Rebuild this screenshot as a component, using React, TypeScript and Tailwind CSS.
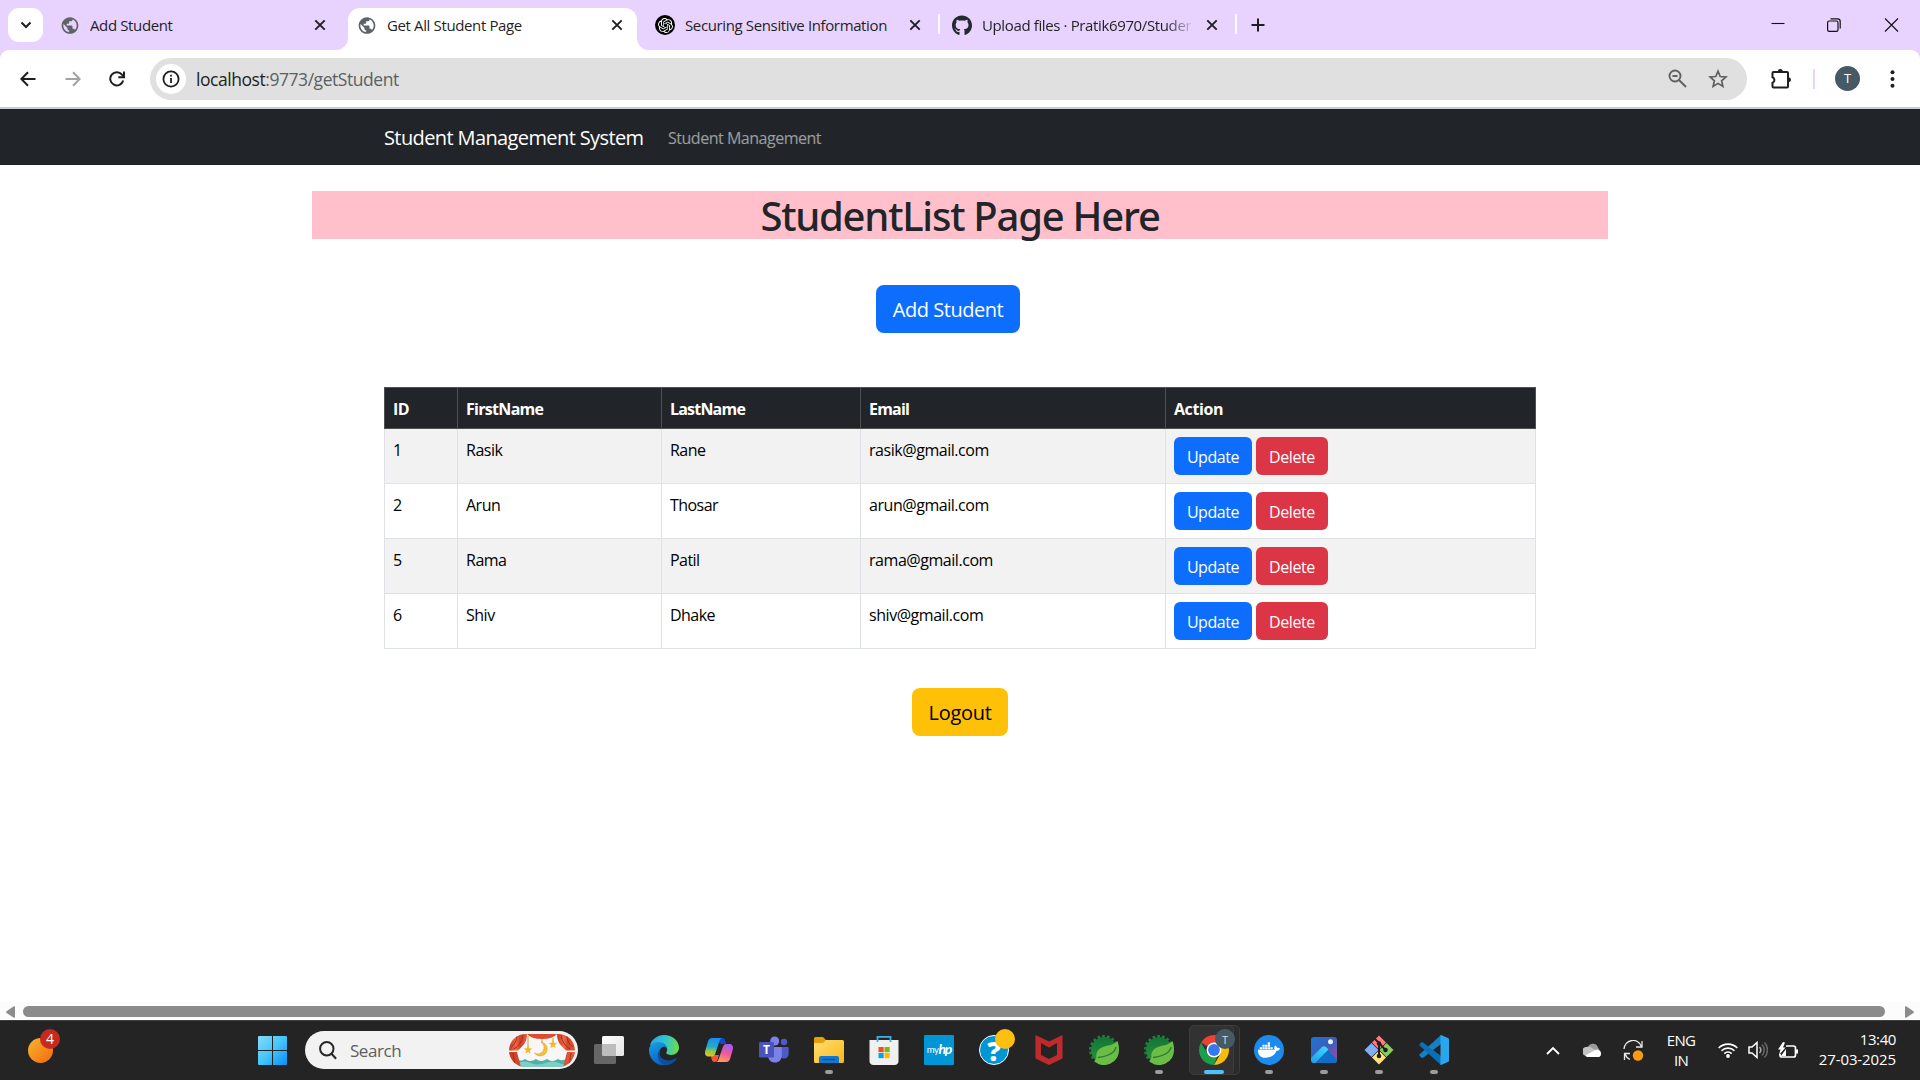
import React from "react";
import { FaDocker, FaGithub } from "react-icons/fa";
import { MdPublic } from "react-icons/md";
import { SiOpenai } from "react-icons/si";

const students = [
  { id: 1, first: "Rasik", last: "Rane", email: "rasik@gmail.com" },
  { id: 2, first: "Arun", last: "Thosar", email: "arun@gmail.com" },
  { id: 5, first: "Rama", last: "Patil", email: "rama@gmail.com" },
  { id: 6, first: "Shiv", last: "Dhake", email: "shiv@gmail.com" },
];

function CloseIcon() {
  return (
    <svg width="12" height="12" viewBox="0 0 12 12" fill="none" stroke="#1f1f1f" strokeWidth="1.9">
      <path d="M1.3 1.3l9.4 9.4M10.7 1.3L1.3 10.7" />
    </svg>
  );
}

function Tab({ icon, title, active, fade }: { icon: React.ReactNode; title: string; active?: boolean; fade?: boolean }) {
  return (
    <div className={"relative flex h-[42px] shrink-0 items-center pl-[9px] pr-[14px] " + (active ? "w-[289px] rounded-t-[12px] bg-white pb-[8px]" : "w-[297px]")}>
      {active && (
        <>
          <svg className="absolute -left-[12px] bottom-0" width="12" height="12">
            <path d="M12 0v12H0A12 12 0 0 0 12 0z" fill="#fff" />
          </svg>
          <svg className="absolute -right-[12px] bottom-0" width="12" height="12">
            <path d="M0 0v12h12A12 12 0 0 1 0 0z" fill="#fff" />
          </svg>
        </>
      )}
      <span className="flex size-5 shrink-0 items-center justify-center">{icon}</span>
      <span
        className={
          "ml-[10px] h-5 w-[209px] overflow-hidden whitespace-nowrap text-[15px] leading-5 tracking-[-0.37px] " +
          (fade ? "[mask-image:linear-gradient(to_right,black_88%,transparent_102%)]" : "")
        }
      >
        {title}
      </span>
      <span className="ml-auto">{active ? <CloseIcon /> : <span className="mr-[8px] block"><CloseIcon /></span>}</span>
    </div>
  );
}

function TabStrip() {
  const globe = <MdPublic className="size-[21px] text-[#5f6368]" />;
  return (
    <div className="flex h-[50px] items-start bg-[#e8d3ff] pt-[8px]">
      <div className="ml-[8px] flex h-[34px] w-[35px] items-center justify-center rounded-[11px] bg-white">
        <svg width="12" height="8" viewBox="0 0 12 8" fill="none" stroke="#1f1f1f" strokeWidth="2">
          <path d="M1.5 1.5L6 6l4.500-4.500" />
        </svg>
      </div>
      <div className="ml-[8px] flex h-[34px] items-center">
        <Tab icon={globe} title="Add Student" />
      </div>
      <div className="flex h-[42px]">
        <Tab icon={globe} title="Get All Student Page" active />
      </div>
      <div className="ml-[9px] flex h-[34px] items-center">
        <Tab
          icon={
            <span className="flex size-5 items-center justify-center rounded-full bg-black">
              <SiOpenai className="size-[15px] text-white" />
            </span>
          }
          title="Securing Sensitive Information"
        />
      </div>
      <div className="-ml-[5px] mt-[6px] h-[20px] w-[2px] bg-white/90" />
      <div className="ml-[3px] flex h-[34px] items-center">
        <Tab icon={<FaGithub className="size-[21px] text-[#24292f]" />} title="Upload files · Pratik6970/Studen" fade />
      </div>
      <div className="-ml-[5px] mt-[6px] h-[20px] w-[2px] bg-white/90" />
      <svg className="ml-[14px] mt-[10px]" width="14" height="14" viewBox="0 0 14 14" stroke="#1f1f1f" strokeWidth="2">
        <path d="M7 .5v13M.5 7h13" />
      </svg>
      <div className="ml-auto flex h-[34px] items-center pr-[21px]">
        <svg width="14" height="14" viewBox="0 0 14 14" fill="none" stroke="#111" strokeWidth="1.1">
          <path d="M.5 5.500h13" />
        </svg>
        <svg className="ml-[42px]" width="14" height="14" viewBox="0 0 14 14" fill="none" stroke="#111" strokeWidth="1.2">
          <rect x=".6" y="3" width="10.400" height="10.400" rx="1.600" />
          <path d="M3.500 .8h7a2.700 2.700 0 0 1 2.700 2.700v7" />
        </svg>
        <svg className="ml-[43px]" width="15" height="14" viewBox="0 0 15 14" fill="none" stroke="#111" strokeWidth="1.1">
          <path d="M1 .5l13 13M14 .5L1 13.500" />
        </svg>
      </div>
    </div>
  );
}

function Toolbar() {
  return (
    <div className="bg-[#e8d3ff]">
      <div className="flex h-[57px] items-center rounded-t-[9px] bg-white">
        <svg className="ml-[20px]" width="16" height="16" viewBox="0 0 16 16" fill="none" stroke="#1f1f1f" strokeWidth="2">
          <path d="M15.500 8H1.800M8 1.300L1.400 8 8 14.700" />
        </svg>
        <svg className="ml-[29px]" width="16" height="16" viewBox="0 0 16 16" fill="none" stroke="#a3a3a3" strokeWidth="2">
          <path d="M.5 8h13.700M8 1.300L14.600 8 8 14.700" />
        </svg>
        <svg className="ml-[28px]" width="16" height="16" viewBox="0 0 16 16" fill="none" stroke="#1f1f1f" strokeWidth="2">
          <path d="M14.200 9.500A6.600 6.600 0 1 1 13 3.700L14.500 5.500" />
          <path d="M15 .5v5.700H9.300" />
        </svg>
        <div className="ml-[25px] flex h-[42px] w-[1597px] items-center rounded-full bg-[#e0e0e0] pl-[6px] pr-[19px]">
          <span className="flex size-[30px] items-center justify-center rounded-full bg-white">
            <svg width="18" height="18" viewBox="0 0 18 18" fill="none" stroke="#1f1f1f" strokeWidth="1.8">
              <circle cx="9" cy="9" r="7.600" />
              <path d="M9 8v5M9 4.700v1.900" />
            </svg>
          </span>
          <span className="ml-[10px] pt-[1px] text-[17.500px] leading-6 tracking-[-0.45px] text-[#5c5f63]">
            <span className="text-[#1f1f1f]">localhost</span>:9773/getStudent
          </span>
          <svg className="ml-auto" width="19" height="19" viewBox="0 0 19 19" fill="none" stroke="#5f6061" strokeWidth="1.900">
            <circle cx="7" cy="7" r="5.500" />
            <path d="M11 11l7 7M4.500 7h5" />
          </svg>
          <svg className="ml-[21px]" width="20" height="19" viewBox="0 0 20 19" fill="none" stroke="#5f6061" strokeWidth="1.700">
            <path d="M10 2.200l2.200 5.300 5.700.5-4.300 3.800 1.300 5.600L10 14.400l-4.900 3 1.300-5.600L2.100 8l5.700-.5z" />
          </svg>
        </div>
        <svg className="ml-[23px]" width="22" height="22" viewBox="0 0 22 22">
          <path d="M3.500 4H17a1 1 0 0 1 1 1v13.500a1 1 0 0 1-1 1H3.500a1 1 0 0 1-1-1v-3.700a3 3 0 0 0 0-5.600V5a1 1 0 0 1 1-1z" fill="none" stroke="#1f1f1f" strokeWidth="2" />
          <path d="M7.800 3.500a2.500 2.500 0 0 1 5 0zM18.500 9.200a2.500 2.500 0 0 1 0 5z" fill="#1f1f1f" />
        </svg>
        <div className="ml-[21px] h-5 w-[2px] bg-[#e8d3ff]" />
        <span className="ml-[20px] flex size-[25px] items-center justify-center rounded-full bg-[#455a64] text-[13px] text-white">T</span>
        <svg className="ml-[30px]" width="5" height="18" viewBox="0 0 5 18" fill="#1f1f1f">
          <circle cx="2.500" cy="2.200" r="2" />
          <circle cx="2.500" cy="9" r="2" />
          <circle cx="2.500" cy="15.800" r="2" />
        </svg>
      </div>
      <div className="h-[2px] bg-[#cacccd]" />
    </div>
  );
}

function StudentPage() {
  return (
    <main className="flex h-[893px] flex-col bg-white">
      <nav className="flex h-[56px] shrink-0 items-center bg-[#212529] pl-[384px] pt-[2px]">
        <span className="w-[260px] whitespace-nowrap text-[20px] leading-[30px] tracking-[-0.61px] text-white">Student Management System</span>
        <span className="ml-[24px] whitespace-nowrap text-[16px] leading-6 tracking-[-0.48px] text-white/55">Student Management</span>
      </nav>
      <h1 className="mt-[26px] h-[48px] w-[1296px] self-center bg-[#ffc0cb] text-center font-['Noto_Sans',sans-serif] text-[40px] font-medium leading-[50px] tracking-[-1.24px] text-[#212529]">
        StudentList Page Here
      </h1>
      <button className="ml-[876px] mt-[46px] h-[48px] w-[144px] shrink-0 rounded-[8px] bg-[#0d6efd] pt-[2px] text-[20px] leading-[30px] tracking-[-0.46px] text-white">
        Add Student
      </button>
      <table className="ml-[384px] mt-[54px] w-[1152px] table-fixed border-collapse text-[16px] leading-6 text-black">
        <colgroup>
          <col className="w-[73px]" />
          <col className="w-[204px]" />
          <col className="w-[199px]" />
          <col className="w-[305px]" />
          <col />
        </colgroup>
        <thead>
          <tr className="bg-[#212529] text-left text-white">
            <th className="h-[41px] border border-[#4d5154] px-2 pt-px font-bold tracking-[-0.6px]">ID</th>
            <th className="border border-[#4d5154] px-2 pt-px font-bold tracking-[-0.7px]">FirstName</th>
            <th className="border border-[#4d5154] px-2 pt-px font-bold tracking-[-0.8px]">LastName</th>
            <th className="border border-[#4d5154] px-2 pt-px font-bold tracking-[-0.8px]">Email</th>
            <th className="border border-[#4d5154] px-2 pt-px font-bold tracking-[-0.42px]">Action</th>
          </tr>
        </thead>
        <tbody>
          {students.map((s) => (
            <tr key={s.id} className="h-[55px] align-top odd:bg-[#f2f2f2]">
              <td className="border border-[#dee2e6] px-2 pb-[7px] pt-[9px]">{s.id}</td>
              <td className="border border-[#dee2e6] px-2 pb-[7px] pt-[9px] tracking-[-0.5px]">{s.first}</td>
              <td className="border border-[#dee2e6] px-2 pb-[7px] pt-[9px] tracking-[-0.55px]">{s.last}</td>
              <td className="border border-[#dee2e6] px-2 pb-[7px] pt-[9px] tracking-[-0.45px]">{s.email}</td>
              <td className="border border-[#dee2e6] p-2">
                <div className="flex gap-1">
                  <button className="h-[38px] w-[78px] rounded-[6px] bg-[#0d6efd] pt-[2px] tracking-[-0.43px] text-white">Update</button>
                  <button className="h-[38px] w-[72px] rounded-[6px] bg-[#dc3545] pt-[2px] tracking-[-0.4px] text-white">Delete</button>
                </div>
              </td>
            </tr>
          ))}
        </tbody>
      </table>
      <button className="mt-[39px] h-[48px] w-[96px] shrink-0 self-center rounded-[8px] bg-[#ffc107] pt-[2px] text-[20px] leading-[30px] tracking-[-0.3px] text-black">
        Logout
      </button>
    </main>
  );
}

function HorizontalScrollbar() {
  return (
    <div className="flex h-[18px] items-center bg-[#fcfcfc] px-[6px] pb-[1px]">
      <svg className="mt-[2px]" width="9" height="12" viewBox="0 0 9 12" fill="#8b8b8b">
        <path d="M9 1.200v9.600a1 1 0 0 1-1.600.8L.6 6.900a1 1 0 0 1 0-1.600L7.400.4A1 1 0 0 1 9 1.200z" />
      </svg>
      <div className="ml-[8px] mt-[1px] h-[11px] w-[1862px] rounded-full bg-[#8b8b8b]" />
      <svg className="ml-[20px] mt-[2px]" width="9" height="12" viewBox="0 0 9 12" fill="#8b8b8b">
        <path d="M0 1.200v9.600a1 1 0 0 0 1.600.8l6.800-4.700a1 1 0 0 0 0-1.600L1.600.4A1 1 0 0 0 0 1.200z" />
      </svg>
    </div>
  );
}

function CurtainArt() {
  return (
    <svg width="66" height="33" viewBox="0 0 66 33">
      <defs>
        <clipPath id="artClip"><rect width="66" height="33" rx="16.500" /></clipPath>
        <linearGradient id="curtain" x1="0" x2="1">
          <stop offset="0" stopColor="#c23a20" /><stop offset=".4" stopColor="#f0694a" /><stop offset=".6" stopColor="#cf4327" /><stop offset="1" stopColor="#e8593a" />
        </linearGradient>
      </defs>
      <g clipPath="url(#artClip)">
        <rect width="66" height="33" fill="#f8f6f6" />
        <path d="M8 25q4 3 8 0q5 4 11 0q5 4 11 0q5 4 11 0q5 3 9-1v9H8z" fill="#4fb0a8" />
        <path d="M8 29q8-3 14 0t14 0 14 0 10-1v5H8z" fill="#7fd0c4" />
        <path d="M0 0h18q0 8-5 12.500l-4 4H0z" fill="url(#curtain)" />
        <path d="M66 0H48q0 8 5 12.500l4 4h9z" fill="url(#curtain)" />
        <path d="M0 18h8q2 8 4 15H0zM66 18h-8q-2 8-4 15h12z" fill="url(#curtain)" />
        <path d="M14 1Q13 10 5 15M8 1Q8 9 2 13M52 1q1 9 9 14M58 1q0 8 6 12M4 19l2 14M62 19l-2 14" stroke="#a92f1b" strokeWidth="1" fill="none" />
        <path d="M18 0h30q-4 5-15 5T18 0z" fill="#dd4c2e" />
        <path d="M19 2v14M44 4v4M33 5v4" stroke="#d3a02a" strokeWidth="1" />
        <path d="M19 11.500l1.200 2.800 3 .3-2.300 2 .7 3-2.600-1.500-2.600 1.500.7-3-2.300-2 3-.3zM44 6l1.200 2.800 3 .3-2.300 2 .7 3-2.600-1.500-2.600 1.500.7-3-2.300-2 3-.3z" fill="#f2b92a" />
        <path d="M32 8a7 7 0 1 1-6.500 11 6.200 6.200 0 0 0 6.500-11z" fill="#f3c23a" stroke="#d99e22" strokeWidth=".5" />
      </g>
    </svg>
  );
}

const TaskViewIcon = () => (
  <svg width="30" height="30" viewBox="0 0 30 30">
    <defs><linearGradient id="tv" x1="0" y1="0" x2="1" y2="1"><stop stopColor="#fff" /><stop offset="1" stopColor="#e4e4e4" /></linearGradient></defs>
    <rect x="8" y="1" width="22" height="20" rx="1.500" fill="url(#tv)" />
    <rect x="0" y="9" width="22" height="20" rx="1.500" fill="#777" fillOpacity=".8" />
    <path d="M8 9h14v12H9.500A1.500 1.500 0 0 1 8 19.500z" fill="#bdbdbd" />
  </svg>
);

const EdgeIcon = () => (
  <svg width="30" height="30" viewBox="0 0 30 30">
    <defs>
      <linearGradient id="eg1" x1="0" y1=".4" x2="1" y2=".5"><stop stopColor="#2aa6e0" /><stop offset=".5" stopColor="#2fc4d4" /><stop offset="1" stopColor="#6fdc45" /></linearGradient>
      <linearGradient id="eg2" x1="0" y1="0" x2=".4" y2="1"><stop stopColor="#1ba0e2" /><stop offset="1" stopColor="#0a63c4" /></linearGradient>
    </defs>
    <path d="M.8 11C2.500 4 8.500 0 15 0c8.500 0 15 6 15 12.600 0 4.600-3.600 7.400-7.600 7.400-3.400 0-5.200-1.200-5.200-2.200 0-.7 1-1.200 1-3.300C18.200 11 14.500 8 10 8 5.500 8 2 9.600.8 11z" fill="url(#eg1)" />
    <path d="M0 15c0-4.500 4.500-8 9.600-8 4.500 0 8.400 3.200 8.500 7-.9-1.700-2-2.200-3.100-2.200-2.500 0-4.800 3-4.800 6.700 0 5.500 4.600 10.300 9.600 11A15 15 0 0 1 0 15z" fill="url(#eg2)" />
    <path d="M11.500 14.500c-3 7 2.500 11 8 11 3 0 5.500-1 7.500-2.400.7-.4 1 .2.600.8C25 27.700 21.500 30 16.500 30 9.500 29 6 18 11.500 14.500z" fill="#0d4f9e" />
  </svg>
);

const CopilotIcon = () => (
  <svg width="30" height="30" viewBox="0 0 30 30">
    <defs>
      <linearGradient id="cp1" x1=".3" y1="0" x2=".2" y2="1"><stop stopColor="#1c8ef0" /><stop offset=".45" stopColor="#23a9cf" /><stop offset=".7" stopColor="#8ccb45" /><stop offset="1" stopColor="#f3c018" /></linearGradient>
      <linearGradient id="cp2" x1=".6" y1="0" x2=".3" y2="1"><stop stopColor="#a35cf0" /><stop offset=".5" stopColor="#ee5a9c" /><stop offset="1" stopColor="#fda05a" /></linearGradient>
    </defs>
    <path d="M13 3h5.500c1.700 0 2.200 1.200 2.700 3l.8 3h-6z" fill="#1648c4" />
    <path d="M7 20h8l-1.500 5c-.5 1.300-1.500 2-3 2-1.700 0-2.500-1-3-3z" fill="#f2553d" />
    <path d="M8 3h10c-1.500.5-2 1.500-2.500 3l-4 12c-.7 2.500-1.700 3.500-4 3.500H4.600C1.500 21.500.5 19 1.200 16L4 6.500C4.700 4.200 6 3 8 3z" fill="url(#cp1)" />
    <path d="M22.300 27H12c1.600-.5 2.200-1.500 2.700-3l4-11.500C19.500 10 20.500 9 22.700 9h2.800c3 0 4 2.500 3.300 5.500L26.200 23.500C25.500 26 24.200 27 22.300 27z" fill="url(#cp2)" />
  </svg>
);

const TeamsIcon = () => (
  <svg width="30" height="30" viewBox="0 0 30 30">
    <circle cx="25" cy="7" r="3.200" fill="#5059c9" />
    <path d="M20 12h8.500c.8 0 1.200.5 1.200 1.200v5.600c0 3-2 4.700-4.500 4.700S20 22 20 19z" fill="#5059c9" />
    <circle cx="15.700" cy="6" r="4.500" fill="#7b83eb" />
    <path d="M9 12h12.500c.8 0 1.300.5 1.300 1.300V20c0 5-3 7.500-6.900 7.500S9 25 9 20z" fill="#7b83eb" />
    <rect y="7" width="15" height="15.500" rx="1.300" fill="#4b53bc" />
    <text x="7.500" y="18.500" textAnchor="middle" fontFamily="Open Sans, sans-serif" fontWeight="700" fontSize="12" fill="#fff">T</text>
  </svg>
);

const ExplorerIcon = () => (
  <svg width="30" height="30" viewBox="0 0 30 30">
    <defs><linearGradient id="fe" x1="0" y1="0" x2="1" y2="1"><stop stopColor="#ffdf74" /><stop offset="1" stopColor="#fbb716" /></linearGradient></defs>
    <path d="M0 3.500A1.500 1.500 0 0 1 1.500 2H9l3 3h6v6H0z" fill="#e3a008" />
    <path d="M0 8h9l3-3h16.500A1.500 1.500 0 0 1 30 6.500v20a1.500 1.500 0 0 1-1.500 1.500h-27A1.500 1.500 0 0 1 0 26.500z" fill="url(#fe)" />
    <path d="M5 28v-5a2 2 0 0 1 2-2h16a2 2 0 0 1 2 2v5z" fill="#1377d1" />
    <path d="M9 24.500h12" stroke="#0a4f97" strokeWidth="1.300" />
  </svg>
);

const StoreIcon = () => (
  <svg width="30" height="30" viewBox="0 0 30 30">
    <path d="M.5 5h29v20.500a4 4 0 0 1-4 4.500h-21a4 4 0 0 1-4-4.500z" fill="#f0f0f0" />
    <path d="M8.500 7V1.800h13V7" fill="none" stroke="#3ab2ea" strokeWidth="1.800" />
    <rect x="9.500" y="12" width="5.200" height="5.200" fill="#f25022" />
    <rect x="15.500" y="12" width="5.200" height="5.200" fill="#7fba00" />
    <rect x="9.500" y="18" width="5.200" height="5.200" fill="#00a4ef" />
    <rect x="15.500" y="18" width="5.200" height="5.200" fill="#ffb900" />
  </svg>
);

const MyHpIcon = () => (
  <span className="flex size-[30px] items-center justify-center rounded-[1px] bg-[#0096d6] text-white">
    <span className="font-['Lato',sans-serif] text-[9.500px] leading-none tracking-[-0.5px]">my</span>
    <span className="pb-[2px] font-['Lato',sans-serif] text-[14px] font-bold italic leading-none tracking-[-1.2px]">hp</span>
  </span>
);

const HelpIcon = () => (
  <span className="relative flex size-[30px] items-center justify-center rounded-full border-[1.500px] border-white bg-[#0096d6]">
    <span className="font-['Noto_Sans',sans-serif] text-[27px] font-black leading-none text-white">?</span>
    <span className="absolute -right-[7px] -top-[7px] size-5 rounded-full bg-[#fdc00f]" />
  </span>
);

const McAfeeIcon = () => (
  <svg width="30" height="30" viewBox="0 0 30 30">
    <path d="M1.500 0L15 6.500 28.500 0v23.500L15 30 1.500 23.500zM7 8v12l8 4 8-4V8l-8 4.500z" fill="#c12a2c" fillRule="evenodd" />
  </svg>
);

const SpringIcon = () => (
  <svg width="30" height="30" viewBox="0 0 30 30">
    <defs><linearGradient id="sp" x1="0" y1="0" x2="0" y2="1"><stop stopColor="#127436" /><stop offset="1" stopColor="#2c9440" /></linearGradient></defs>
    <circle cx="15" cy="15" r="13" fill="url(#sp)" />
    <circle cx="15" cy="15" r="13.700" fill="none" stroke="#1e8139" strokeWidth="2.600" strokeDasharray="2.600 2.200" />
    <path d="M28.500 6C25 10 20 10 15.500 11.500 9 13.500 6.500 18 7.500 22.500L5.500 26.500A15 15 0 0 0 30 15C30 11.500 29.500 8.500 28.500 6z" fill="#6cbd45" />
    <path d="M27 12C26 18 20 21 9 22.500" fill="none" stroke="#2b8038" strokeWidth="1.500" />
  </svg>
);

const ChromeIcon = () => (
  <span className="relative">
    <svg width="30" height="30" viewBox="0 0 30 30">
      <path d="M15 15L2.010 7.500A15 15 0 0 1 27.990 7.500z" fill="#ea4335" />
      <path d="M15 7.500h12.990A15 15 0 0 1 15 30l6.500-11.250z" fill="#fbbc04" />
      <path d="M2.010 7.500l6.500 11.250L15 22.500l3.250-.9L15 30A15 15 0 0 1 2.010 7.500z" fill="#1e9e4a" />
      <circle cx="15" cy="15" r="7.500" fill="#fff" />
      <circle cx="15" cy="15" r="5.900" fill="#3478f0" />
    </svg>
    <span className="absolute -right-[6px] -top-[6px] flex size-5 items-center justify-center rounded-full bg-[#455a64] text-[11px] leading-none text-[#d4dade]">T</span>
  </span>
);

const DockerIcon = () => (
  <span className="flex size-[30px] items-center justify-center rounded-full bg-[#1d8bed]">
    <FaDocker className="size-[22px] text-white" />
  </span>
);

const PhotosIcon = () => (
  <svg width="30" height="30" viewBox="0 0 30 30">
    <defs>
      <linearGradient id="ph1" x1="0" y1="0" x2="1" y2="1"><stop stopColor="#1e74d2" /><stop offset=".5" stopColor="#3b5fb8" /><stop offset="1" stopColor="#b0489c" /></linearGradient>
      <linearGradient id="ph2" x1="0" y1="1" x2="1" y2="0"><stop stopColor="#18a0ea" /><stop offset="1" stopColor="#42d9fb" /></linearGradient>
      <clipPath id="phc"><rect x="2" y="2" width="26" height="26" rx="3" /></clipPath>
    </defs>
    <g clipPath="url(#phc)">
      <rect x="2" y="2" width="26" height="26" fill="url(#ph1)" />
      <path d="M8 28l8-15.500 12 12V28z" fill="#0d6fc8" />
      <path d="M2 23L12.500 12.500q2.500-2.500 5 0l2 2L6 28H2z" fill="url(#ph2)" />
    </g>
    <circle cx="21.500" cy="6.700" r="2.500" fill="#eaf3ff" />
  </svg>
);

const GitIcon = () => (
  <svg width="30" height="30" viewBox="0 0 30 30">
    <path d="M15 .5l7 7-7 7-7-7z" fill="#ff7b7b" />
    <path d="M22.500 8l7 7-7 7-7-7z" fill="#84cf5c" />
    <path d="M7.500 8l7 7-7 7-7-7z" fill="#7fb0f5" />
    <path d="M15 15.500l7 7-7 7-7-7z" fill="#ffe27a" />
    <path d="M11 4l4 4v13M15 8l6 6.500" stroke="#231f20" strokeWidth="2" fill="none" />
    <circle cx="15" cy="8.500" r="2.300" fill="#231f20" />
    <circle cx="21.500" cy="15" r="2.300" fill="#231f20" />
    <circle cx="15" cy="21" r="2.300" fill="#231f20" />
  </svg>
);

const VsCodeIcon = () => (
  <svg width="30" height="30" viewBox="0 0 30 30">
    <path d="M22 0L.7 19.300a1.300 1.300 0 0 0 0 1.800l1.700 1.500c.5.400 1.200.5 1.700.1L22 9z" fill="#1580c8" />
    <path d="M22 30L.7 10.700a1.300 1.300 0 0 1 0-1.800l1.700-1.500c.5-.4 1.200-.4 1.700 0L22 21z" fill="#0b6fb8" />
    <path d="M22 0l7 3c.6.300 1 .8 1 1.500v21c0 .7-.4 1.200-1 1.500l-7 3c-.5.200-.5-.3-.5-.8V1c0-.5 0-1.200.5-1z" fill="#2aa6ee" />
  </svg>
);

const apps: { icon: React.ReactNode; state?: "open" | "active" }[] = [
  { icon: <TaskViewIcon /> },
  { icon: <EdgeIcon /> },
  { icon: <CopilotIcon /> },
  { icon: <TeamsIcon /> },
  { icon: <ExplorerIcon />, state: "open" },
  { icon: <StoreIcon /> },
  { icon: <MyHpIcon /> },
  { icon: <HelpIcon /> },
  { icon: <McAfeeIcon /> },
  { icon: <SpringIcon /> },
  { icon: <SpringIcon />, state: "open" },
  { icon: <ChromeIcon />, state: "active" },
  { icon: <DockerIcon />, state: "open" },
  { icon: <PhotosIcon />, state: "open" },
  { icon: <GitIcon />, state: "open" },
  { icon: <VsCodeIcon />, state: "open" },
];

function AppButton({ icon, state }: { icon: React.ReactNode; state?: "open" | "active" }) {
  return (
    <div className="relative flex h-[60px] w-[55px] shrink-0 items-center justify-center">
      {state === "active" && (
        <>
          <span className="absolute left-[8px] top-[5px] h-[50px] w-[45px] rounded-[5px] border border-[#3d3c3c] bg-[#2c2b2b]" />
          <span className="absolute left-[2px] top-[5px] h-[50px] w-[45px] rounded-[5px] border border-[#3e3d3d] bg-[#333232]" />
        </>
      )}
      <span className="relative flex">{icon}</span>
      {state === "open" && <span className="absolute bottom-[6px] h-[4px] w-[8px] rounded-full bg-[#9c9b9b]" />}
      {state === "active" && <span className="absolute bottom-[6px] h-[4px] w-[20px] rounded-full bg-[#4cc2ff]" />}
    </div>
  );
}

function Tray() {
  return (
    <div className="ml-auto flex h-[60px] items-center text-white">
      <svg width="14" height="9" viewBox="0 0 14 9" fill="none" stroke="#fff" strokeWidth="1.900">
        <path d="M1 8l6-6 6 6" />
      </svg>
      <svg className="ml-[23px]" width="20" height="14" viewBox="0 0 20 14">
        <path d="M5 3.500A5.500 5.500 0 0 1 15 4.500L17 8 6 10 1 8A4.500 4.500 0 0 1 5 3.500z" fill="#9b9b9b" />
        <path d="M2 12.500A4.200 4.200 0 0 1 4.500 4.300c2-.5 3.500 0 5 1.200L16 9z" fill="#c4c4c4" />
        <path d="M2 12.500l10-5.200c1.500-1 3-.8 4 0A3.800 3.800 0 0 1 16.300 14H4.500A4.500 4.500 0 0 1 2 12.500z" fill="#fff" />
      </svg>
      <svg className="ml-[20px]" width="21" height="21" viewBox="0 0 21 21" fill="none" stroke="#e8e8e8" strokeWidth="1.300">
        <path d="M1 9A9 9 0 0 1 18.500 6.500M19 1v6h-6M7 19.500A9 9 0 0 1 2 13.800M1.500 20v-6.500H7" />
        <circle cx="15" cy="15.500" r="5.200" fill="#ff9a0d" stroke="none" />
      </svg>
      <div className="ml-[20px] w-[34px] text-center text-[15px] leading-[20px] tracking-[-0.7px]">
        ENG
        <br />
        IN
      </div>
      <svg className="ml-[20px]" width="20" height="16" viewBox="0 0 20 16" fill="none" stroke="#fff" strokeWidth="1.600">
        <path d="M.7 6a13 13 0 0 1 18.600 0M3.500 8.800a9.200 9.200 0 0 1 13 0M6.300 11.600a5.200 5.200 0 0 1 7.400 0" />
        <circle cx="10" cy="14" r="1.900" fill="#fff" stroke="none" />
      </svg>
      <svg className="ml-[10px]" width="20" height="18" viewBox="0 0 20 18" fill="none" strokeWidth="1.500">
        <path d="M1 6h3l5-4.500v15L4 12H1z" stroke="#fff" />
        <path d="M11.500 6a4.500 4.500 0 0 1 0 6" stroke="#aaa" />
        <path d="M14 3.500a8 8 0 0 1 0 11M16.500 1.500a11 11 0 0 1 0 15" stroke="#686868" />
      </svg>
      <svg className="ml-[10px]" width="20" height="17" viewBox="0 0 20 17" fill="none">
        <path d="M8 4h7.500a2 2 0 0 1 2 2v7a2 2 0 0 1-2 2H4a2 2 0 0 1-2-2v-1" stroke="#fff" strokeWidth="1.700" />
        <path d="M18 7.500h2v4h-2z" fill="#fff" />
        <path d="M5 0L0 7.500h2.500L1 13l6.500-7.500H5L7 .5zM3 14l5-7v7z" fill="#fff" />
      </svg>
      <div className="ml-[18px] mr-[24px] w-[80px] whitespace-nowrap pb-[2px] text-right text-[15px] leading-[20px]">
        <div className="tracking-[-0.4px]">13:40</div>
        <div className="tracking-[-0.1px]">27-03-2025</div>
      </div>
    </div>
  );
}

function Taskbar() {
  return (
    <footer className="flex h-[60px] items-start bg-[#242425] shadow-[inset_0_1px_0_#3f3f40]">
      <div className="flex h-[60px] w-[258px] items-center pl-[28px]">
        <span className="relative size-[25px] rounded-full bg-linear-to-br from-[#f5b52c] to-[#f2660f]">
          <span className="absolute -right-[7px] -top-[9px] flex size-[20px] items-center justify-center rounded-full bg-[#c42b1c] text-[14px] leading-none text-white">4</span>
        </span>
      </div>
      <svg className="mt-[16px]" width="29" height="29" viewBox="0 0 29 29">
        <defs><linearGradient id="win" x1="0" y1="0" x2="1" y2="1"><stop stopColor="#85dbfc" /><stop offset=".5" stopColor="#44c5fb" /><stop offset="1" stopColor="#0a8ff5" /></linearGradient></defs>
        <path d="M1 0h13v14H0V1a1 1 0 0 1 1-1zM15 0h13a1 1 0 0 1 1 1v13H15zM0 15h14v14H1a1 1 0 0 1-1-1zM15 15h14v13a1 1 0 0 1-1 1H15z" fill="url(#win)" />
      </svg>
      <div className="ml-[18px] mt-[11px] flex h-[38px] w-[273px] items-center rounded-full bg-[#f2f2f2] pl-[14px] pr-[3px]">
        <svg width="18" height="19" viewBox="0 0 18 19" fill="none" stroke="#262626" strokeWidth="2">
          <circle cx="7.800" cy="7.800" r="6.700" />
          <path d="M12.500 12.800l4.600 5" />
        </svg>
        <span className="ml-[13px] pt-[2px] text-[17px] leading-6 tracking-[-0.45px] text-[#5d5d5d]">Search</span>
        <span className="ml-auto"><CurtainArt /></span>
      </div>
      <div className="ml-[3.500px] flex">
        {apps.map((a, i) => (
          <AppButton key={i} icon={a.icon} state={a.state} />
        ))}
      </div>
      <Tray />
    </footer>
  );
}

export default function App() {
  return (
    <div className="h-[1080px] w-[1920px] overflow-hidden bg-white font-['Open_Sans','Noto_Sans',sans-serif] text-[#1f1f1f]">
      <TabStrip />
      <Toolbar />
      <StudentPage />
      <HorizontalScrollbar />
      <Taskbar />
    </div>
  );
}
